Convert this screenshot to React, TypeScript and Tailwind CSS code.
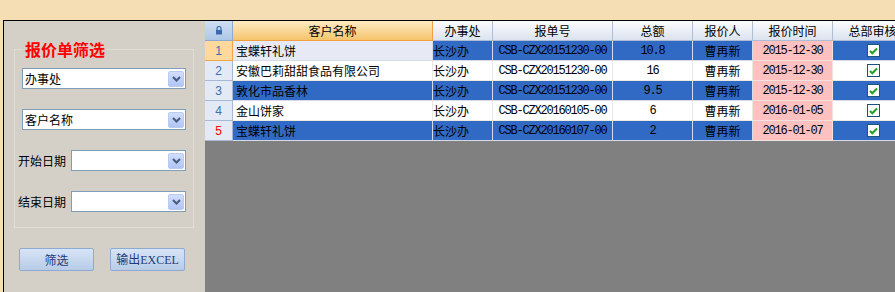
import React from 'react'

interface Row {
  name: string
  office: string
  code: string
  amount: string
  person: string
  date: string
}

const rows: Row[] = [
  { name: '宝蝶轩礼饼', office: '长沙办', code: 'CSB-CZX20151230-00', amount: '10.8', person: '曹再新', date: '2015-12-30' },
  { name: '安徽巴莉甜甜食品有限公司', office: '长沙办', code: 'CSB-CZX20151230-00', amount: '16', person: '曹再新', date: '2015-12-30' },
  { name: '敦化市品香林', office: '长沙办', code: 'CSB-CZX20151230-00', amount: '9.5', person: '曹再新', date: '2015-12-30' },
  { name: '金山饼家', office: '长沙办', code: 'CSB-CZX20160105-00', amount: '6', person: '曹再新', date: '2016-01-05' },
  { name: '宝蝶轩礼饼', office: '长沙办', code: 'CSB-CZX20160107-00', amount: '2', person: '曹再新', date: '2016-01-07' },
]

const Chevron = () => (
  <svg width="9" height="6" viewBox="0 0 9 6">
    <path d="M1 1 L4.5 4.5 L8 1" fill="none" stroke="#4a5d82" strokeWidth="2.2" />
  </svg>
)

const Combo = ({ label, width }: { label?: string; width: string }) => (
  <div className={`${width} h-[21px] border border-[#7f9db9] bg-white flex items-center`}>
    <span className="pl-[2px] text-[12px] text-black leading-none">{label}</span>
    <div className="ml-auto mr-[1px] w-[16px] h-[16px] rounded-[2px] border border-[#b9cbf3] bg-gradient-to-b from-[#d2defc] to-[#b0c5f5] flex items-center justify-center">
      <Chevron />
    </div>
  </div>
)

const Check = () => (
  <div className="w-[13px] h-[13px] border border-[#1c5180] bg-white flex items-center justify-center">
    <svg width="9" height="8" viewBox="0 0 9 8">
      <path d="M1 4 L3.3 6.3 L8 1.5" fill="none" stroke="#21a121" strokeWidth="2" />
    </svg>
  </div>
)

const Lock = () => (
  <svg width="8" height="9" viewBox="0 0 8 9">
    <path d="M2 4 V2.5 A2 2 0 0 1 6 2.5 V4" fill="none" stroke="#3b67ad" strokeWidth="1.2" />
    <rect x="1" y="4" width="6" height="4.5" fill="#3b67ad" />
  </svg>
)

const mono = "font-['Liberation_Mono','Noto_Sans_CJK_SC',monospace] text-[12px] tracking-[-1.2px]"

export default function App() {
  return (
    <div className="w-[895px] h-[292px] overflow-hidden bg-[#f5deb3] flex flex-col font-['Noto_Sans_CJK_SC',sans-serif] text-[12px] text-black">
      <div className="h-[20px] shrink-0" />
      <div className="flex flex-1 ml-[3px] border-t border-l border-black min-h-0">
        {/* filter panel */}
        <div className="w-[201px] shrink-0 bg-[#d4d0c8] flex flex-col">
          <fieldset className="mt-[19px] ml-[10px] w-[180px] border border-[#e0ddd3] pb-[15px]">
            <legend className="ml-[8px] px-[2px] text-[16px] leading-[18px] font-bold text-[#ff0000]">报价单筛选</legend>
            <div className="mt-[10px] ml-[7px]">
              <Combo label="办事处" width="w-[164px]" />
            </div>
            <div className="mt-[20px] ml-[7px]">
              <Combo label="客户名称" width="w-[164px]" />
            </div>
            <div className="mt-[20px] ml-[3px] flex items-center">
              <span className="w-[53px] leading-none">开始日期</span>
              <Combo width="w-[115px]" />
            </div>
            <div className="mt-[20px] ml-[3px] flex items-center">
              <span className="w-[53px] leading-none">结束日期</span>
              <Combo width="w-[115px]" />
            </div>
          </fieldset>
          <div className="mt-[20px] ml-[15px] flex gap-[16px]">
            <button className="w-[75px] h-[23px] rounded-[2px] border border-[#8eaad0] bg-gradient-to-b from-[#d6e4f6] to-[#b8cce8] text-[#1d3c78] text-[12px] leading-none">
              筛选
            </button>
            <button className="w-[75px] h-[23px] rounded-[2px] border border-[#8eaad0] bg-gradient-to-b from-[#d6e4f6] to-[#b8cce8] text-[#1d3c78] text-[12px] leading-none font-['Liberation_Serif','Noto_Sans_CJK_SC',serif]">
              输出EXCEL
            </button>
          </div>
        </div>

        {/* grid */}
        <div className="flex-1 bg-[#808080] overflow-hidden">
          <div className="flex h-[20px] w-[708px]">
            <div className="w-[28px] shrink-0 border-r border-b border-[#8eaad2] bg-gradient-to-b from-[#cfdff3] to-[#aec7e8] flex items-center justify-center">
              <Lock />
            </div>
            <div className="w-[200px] shrink-0 border-r border-b border-[#f0a040] bg-gradient-to-b from-[#fdebc0] to-[#f6c46c] flex items-center justify-center">客户名称</div>
            {[
              ['办事处', 'w-[60px]'],
              ['报单号', 'w-[120px]'],
              ['总额', 'w-[80px]'],
              ['报价人', 'w-[60px]'],
              ['报价时间', 'w-[80px]'],
              ['总部审核', 'w-[80px]'],
            ].map(([t, w]) => (
              <div key={t} className={`${w} shrink-0 border-r border-b border-[#aebdd3] bg-gradient-to-b from-[#fbfcfe] to-[#dce3ee] flex items-center justify-center`}>
                {t}
              </div>
            ))}
          </div>
          {rows.map((r, i) => {
            const blue = i % 2 === 0
            const bg = blue ? 'bg-[#316ac5]' : 'bg-white'
            const line = blue ? 'border-[#d4dcec]' : 'border-[#ebe9e0]'
            const first = i === 0
            return (
              <div key={i} className="flex h-[20px] w-[708px]">
                <div
                  className={`w-[28px] shrink-0 border-r border-b flex items-center justify-center ${
                    first ? 'bg-[#ffd89c] border-[#f4a447]' : 'bg-[#e3eaf5] border-[#a7b9d2]'
                  } ${i === 4 ? 'text-[#ff0000]' : 'text-[#3b6fb0]'} font-['Liberation_Sans',sans-serif]`}
                >
                  {i + 1}
                </div>
                <div className={`w-[200px] shrink-0 border-r border-b ${line} ${first ? 'bg-[#e7e9f4]' : bg} pl-[3px] flex items-center`}>{r.name}</div>
                <div className={`w-[60px] shrink-0 border-r border-b ${line} ${bg} flex items-center`}>{r.office}</div>
                <div className={`w-[120px] shrink-0 border-r border-b ${line} ${bg} flex items-center justify-center ${mono}`}>{r.code}</div>
                <div className={`w-[80px] shrink-0 border-r border-b ${line} ${bg} flex items-center justify-center ${mono}`}>{r.amount}</div>
                <div className={`w-[60px] shrink-0 border-r border-b ${line} ${bg} flex items-center justify-center`}>{r.person}</div>
                <div className={`w-[80px] shrink-0 border-r border-b border-[#f3e1dd] bg-[#ffc0c0] flex items-center justify-center ${mono}`}>{r.date}</div>
                <div className={`w-[80px] shrink-0 border-r border-b ${line} ${bg} flex items-center justify-center`}>
                  <div className="ml-[2px]">
                    <Check />
                  </div>
                </div>
              </div>
            )
          })}
        </div>
      </div>
    </div>
  )
}
